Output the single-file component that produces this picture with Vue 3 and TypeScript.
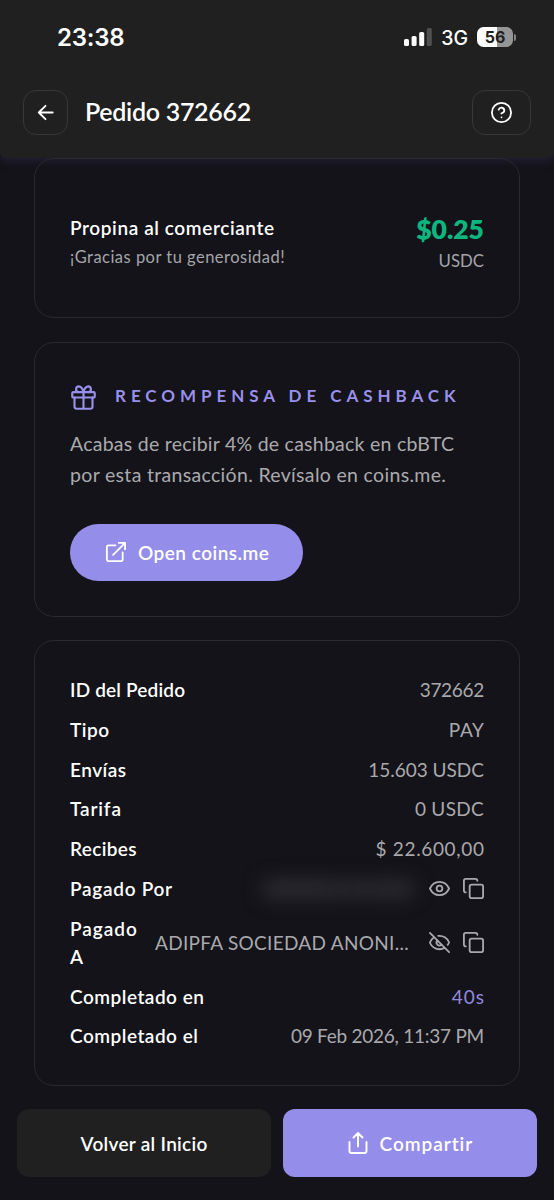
<script setup lang="ts">
interface Row {
  id: string
  label: string
  value?: string
  accent?: boolean
  icon?: 'eye' | 'eye-off'
}

const rows: Row[] = [
  { id: 'order', label: 'ID del Pedido', value: '372662' },
  { id: 'type', label: 'Tipo', value: 'PAY' },
  { id: 'sent', label: 'Envías', value: '15.603 USDC' },
  { id: 'fee', label: 'Tarifa', value: '0 USDC' },
  { id: 'received', label: 'Recibes', value: '$ 22.600,00' },
  { id: 'payer', label: 'Pagado Por', icon: 'eye' },
  { id: 'payee', label: 'Pagado A', value: 'ADIPFA SOCIEDAD ANONI...', icon: 'eye-off' },
  { id: 'duration', label: 'Completado en', value: '40s', accent: true },
  { id: 'date', label: 'Completado el', value: '09 Feb 2026, 11:37 PM' },
]
</script>

<template>
  <div class="screen">
    <header class="top">
      <div class="status">
        <span class="time">23:38</span>
        <div class="indicators">
          <svg class="signal" width="28" height="18" viewBox="0 0 28 18">
            <rect x="0" y="11" width="5" height="7" rx="1.6" fill="#fff" />
            <rect x="7.6" y="8" width="5" height="10" rx="1.6" fill="#fff" />
            <rect x="15.2" y="4" width="5" height="14" rx="1.6" fill="#fff" />
            <rect x="22.8" y="0" width="5" height="18" rx="1.6" fill="#505050" />
          </svg>
          <span class="network">3G</span>
          <div class="battery"><span>56</span></div>
          <i class="battery-tip"></i>
        </div>
      </div>
      <div class="nav">
        <button class="square back" aria-label="Volver">
          <svg width="24" height="24" viewBox="0 0 24 24" class="line">
            <path d="M19.500 12H5M12 19l-7-7 7-7" />
          </svg>
        </button>
        <h1>Pedido 372662</h1>
        <button class="square help" aria-label="Ayuda">
          <svg width="23" height="23" viewBox="0 0 24 24" class="line">
            <circle cx="12" cy="12" r="10" />
            <path d="M9.09 9a3 3 0 0 1 5.83 1c0 2-3 3-3 3M12 17h.01" />
          </svg>
        </button>
      </div>
    </header>

    <main>
      <section class="card tip">
        <div>
          <h2>Propina al comerciante</h2>
          <p class="thanks">¡Gracias por tu generosidad!</p>
        </div>
        <div class="amount">
          <strong>$0.25</strong>
          <p>USDC</p>
        </div>
      </section>

      <section class="card reward">
        <div class="reward-title">
          <svg width="27" height="27" viewBox="0 0 24 24" class="line">
            <rect x="2" y="7.2" width="20" height="4.8" rx="1" />
            <path d="M4 12v8a2 2 0 0 0 2 2h12a2 2 0 0 0 2-2v-8M12 7.2V22M7.5 7.2a2.6 2.6 0 0 1 0-5.1C10 2 11.3 4.4 12 7.2c.7-2.8 2-5.2 4.5-5.1a2.6 2.6 0 0 1 0 5.1" />
          </svg>
          <span>RECOMPENSA DE CASHBACK</span>
        </div>
        <p class="message"><span class="m1">Acabas de recibir 4% de cashback en cbBTC</span><br /><span class="m2">por esta transacción. Revísalo en coins.me.</span></p>
        <button class="pill">
          <svg width="23" height="23" viewBox="0 0 24 24" class="line">
            <path d="M12 4.5H5a2 2 0 0 0-2 2V19a2 2 0 0 0 2 2h12.5a2 2 0 0 0 2-2v-7M15.5 2h6.500v6.500M21.5 2.5l-12 12" />
          </svg>
          <span>Open coins.me</span>
        </button>
      </section>

      <section class="card details">
        <div v-for="row in rows" :key="row.id" class="row" :class="row.id">
          <span class="label">{{ row.label }}</span>
          <div class="content">
            <span v-if="row.value" class="value" :class="{ accent: row.accent }">{{ row.value }}</span>
            <span v-else class="concealed"></span>
            <template v-if="row.icon">
              <svg v-if="row.icon === 'eye'" class="line eye" width="23" height="23" viewBox="0 0 24 24">
                <path d="M2 12c2-4.400 5.600-7 10-7s8 2.600 10 7c-2 4.400-5.600 7-10 7S4 16.400 2 12z" />
                <circle cx="12" cy="12" r="3" />
              </svg>
              <svg v-else class="line eye" width="23" height="23" viewBox="0 0 24 24">
                <path d="M10.700 5.100A10.700 10.700 0 0 1 22 12a11 11 0 0 1-1.500 2.500M14.100 14.200a3 3 0 0 1-4.200-4.300M17.500 17.500A10.700 10.700 0 0 1 2 12a10.800 10.800 0 0 1 4.500-5.500M2 2l20 20" />
              </svg>
              <svg class="line copy" width="23" height="23" viewBox="0 0 24 24">
                <rect x="8" y="8" width="14" height="14" rx="2" />
                <path d="M4 16a2 2 0 0 1-2-2V4a2 2 0 0 1 2-2h10a2 2 0 0 1 2 2" />
              </svg>
            </template>
          </div>
        </div>
      </section>
    </main>

    <footer>
      <button class="action home"><span>Volver al Inicio</span></button>
      <button class="action share">
        <svg width="22" height="24" viewBox="0 0 22 24" class="line">
          <path d="M2.500 11v9a2 2 0 0 0 2 2h13a2 2 0 0 0 2-2v-9M11 15.500V2M6.500 6.500l4.500-4.500 4.500 4.500" />
        </svg>
        <span>Compartir</span>
      </button>
    </footer>
  </div>
</template>

<style>
body {
  margin: 0;
  background: #141319;
}
</style>

<style scoped>
.screen {
  box-sizing: border-box;
  width: 554px;
  height: 1200px;
  overflow: hidden;
  background: #141319;
  color: #fff;
  font-family: Lato, 'Liberation Sans', sans-serif;
}
.screen * {
  box-sizing: border-box;
}
h1, h2, p {
  margin: 0;
}
button {
  margin: 0;
  padding: 0;
  border: 0;
  color: #fff;
  font: inherit;
}
span {
  white-space: nowrap;
}
.line {
  display: block;
  flex: none;
  fill: none;
  stroke: currentColor;
  stroke-width: 1.9;
  stroke-linecap: round;
  stroke-linejoin: round;
}
.top {
  height: 158px;
  background: #202020;
  border-radius: 0 0 6px 6px;
  box-shadow: 0 3px 10px rgba(50, 47, 88, 0.45);
}
.status {
  display: flex;
  justify-content: space-between;
  align-items: center;
  height: 74px;
  padding: 0 38px 0 57px;
  font-family: Inter, sans-serif;
}
.time {
  padding-top: 2px;
  font-size: 24px;
  font-weight: 600;
  line-height: 30px;
  letter-spacing: -0.2px;
}
.indicators {
  display: flex;
  align-items: center;
}
.network {
  padding-top: 2px;
  margin-left: 9px;
  font-size: 19.5px;
  font-weight: 500;
  line-height: 24px;
}
.battery {
  width: 36px;
  height: 20px;
  margin-left: 9px;
  border-radius: 6.5px;
  background: linear-gradient(90deg, #fff 0 20px, #959595 20px);
  color: #202020;
  font-size: 16px;
  font-weight: 700;
  line-height: 20px;
  text-align: center;
}
.battery-tip {
  width: 2px;
  height: 7px;
  margin-left: 1px;
  border-radius: 0 2px 2px 0;
  background: #858585;
}
.nav {
  display: flex;
  align-items: center;
  padding: 16px 23px 0;
}
.square {
  display: grid;
  place-items: center;
  width: 45px;
  height: 45px;
  border: 1px solid #373737;
  border-radius: 13px;
  background: transparent;
}
.back svg {
  width: 23px;
  height: 23px;
}
.help {
  width: 59px;
  margin-left: auto;
}
h1 {
  margin: -3px 0 0 17px;
  font-size: 25px;
  font-weight: 600;
  line-height: 32px;
  letter-spacing: -0.3px;
}
main {
  display: flex;
  flex-direction: column;
  gap: 24px;
  padding: 0 34px;
}
.card {
  border: 1px solid #2a292f;
  border-radius: 20px;
}
.tip {
  position: relative;
  display: flex;
  justify-content: space-between;
  height: 160px;
  padding: 55px 35px 0;
}
h2 {
  font-size: 19px;
  font-weight: 600;
  line-height: 28px;
  letter-spacing: 0.6px;
}
.thanks {
  margin-top: 3px;
  color: #a5a5aa;
  font-size: 16.5px;
  line-height: 24px;
  letter-spacing: 0.48px;
}
.amount {
  text-align: right;
}
.amount strong {
  display: block;
  color: #0cb77f;
  font-size: 26.5px;
  font-weight: 800;
  line-height: 31px;
}
.amount p {
  margin-top: 4px;
  color: #a5a5aa;
  font-size: 16.8px;
  line-height: 24px;
}
.reward {
  height: 275px;
  padding: 40px 35px 0;
}
.reward-title {
  display: flex;
  align-items: center;
  height: 28px;
  color: #9990eb;
}
.reward-title span {
  margin: -3px 0 0 18px;
  font-size: 17px;
  font-weight: 700;
  letter-spacing: 4.95px;
}
.message {
  margin-top: 16.5px;
  color: #aaaaae;
  font-size: 19.5px;
  line-height: 31.5px;
}
.m1 {
  letter-spacing: 0.25px;
}
.m2 {
  letter-spacing: 0.32px;
}
.pill {
  display: flex;
  align-items: center;
  width: 233px;
  height: 57px;
  margin-top: 33.5px;
  padding-left: 34px;
  border-radius: 29px;
  background: #958dea;
  font-size: 19px;
  font-weight: 600;
  letter-spacing: 0.48px;
}
.pill span {
  margin-left: 11px;
}
.details {
  display: flex;
  flex-direction: column;
  gap: 11.8px;
  margin-top: -1px;
  padding: 35px;
}
.row {
  display: flex;
  justify-content: space-between;
  align-items: center;
  font-size: 19px;
  line-height: 28px;
}
.label {
  font-weight: 600;
  letter-spacing: 0.5px;
}
.order .label {
  letter-spacing: 0.17px;
}
.fee .label {
  letter-spacing: 0.85px;
}
.received .label {
  letter-spacing: 0.35px;
}
.payer .label {
  letter-spacing: 0.72px;
}
.payee .label {
  width: 72px;
  white-space: normal;
  letter-spacing: 1px;
}
.content {
  display: flex;
  align-items: center;
  height: 28px;
  color: #a9a9ad;
}
.order .value {
  letter-spacing: -0.3px;
}
.type .value,
.received .value {
  margin-right: -0.6px;
  letter-spacing: 0.65px;
}
.fee .value {
  letter-spacing: 0.3px;
}
.payee .value {
  letter-spacing: 0.3px;
}
.date .value {
  letter-spacing: -0.25px;
}
.value.accent {
  margin-right: -1px;
  color: #9188dd;
  letter-spacing: 1px;
}
.eye {
  margin-left: 19px;
}
.copy {
  margin-left: 11px;
  margin-right: -1px;
}
.concealed {
  width: 154px;
  height: 20px;
  margin-right: -6px;
  border-radius: 9px;
  background: linear-gradient(90deg, #29282e, #2c2b31 25%, #27262c 55%, #2a292f);
  filter: blur(9px);
}
footer {
  display: flex;
  gap: 11.5px;
  padding: 23px 17px 0;
}
.action {
  display: flex;
  flex: 1;
  align-items: center;
  justify-content: center;
  height: 68px;
  border-radius: 12px;
  font-size: 19px;
  font-weight: 600;
  letter-spacing: 0.3px;
}
.home {
  background: #202020;
}
.share {
  background: #958dea;
  letter-spacing: 0.95px;
}
.share svg {
  margin-right: 11px;
}
</style>
